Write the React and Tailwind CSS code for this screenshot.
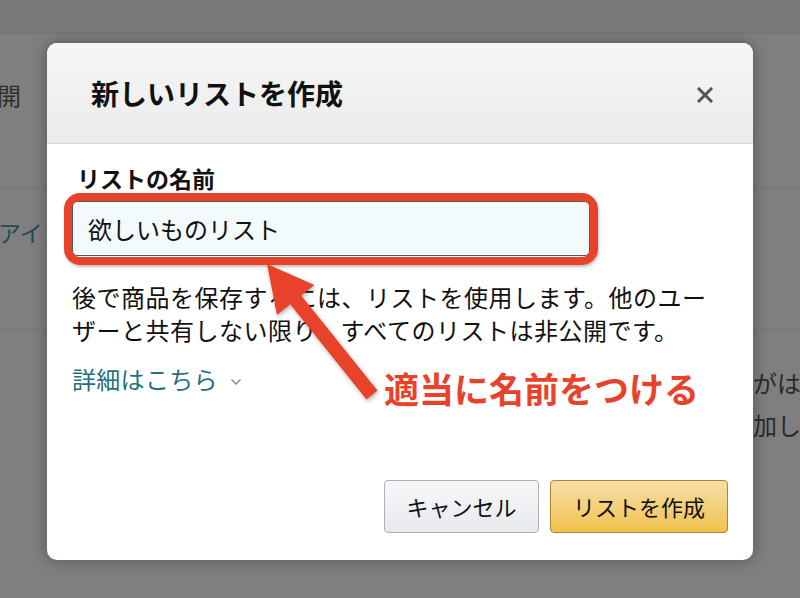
import React from "react";

const font = { fontFamily: '"Noto Sans CJK JP", "Noto Sans", sans-serif' };

export default function App() {
  return (
    <div
      className="relative w-[800px] h-[598px] overflow-hidden bg-[#7f7f7f] font-['Noto_Sans_CJK_JP',sans-serif]"
      style={font}
    >
      {/* background page */}
      <div className="flex flex-col h-full">
        <div className="h-[34px] bg-[#7a7a7a] border-b border-[#727272]" />
        <div className="h-[154px] border-b border-[#767676] pt-[49px]">
          <div className="text-[24px] leading-[24px] text-[#2e2e2e] ml-[-3px]">開</div>
        </div>
        <div className="h-[142px] border-b border-[#767676] pt-[31px]">
          <div className="text-[23px] leading-[26px] text-[#1d4b57] ml-[-2px]">アイ</div>
        </div>
        <div className="flex-1 flex justify-end pt-[32px]">
          <div className="w-[71px] text-[24px] leading-[42px] text-[#2a2a2a] whitespace-nowrap">
            <div>んがは</div>
            <div>追加し</div>
          </div>
        </div>
      </div>

      {/* modal */}
      <div className="absolute left-[47px] top-[43px] w-[706px] h-[517px] bg-white rounded-[10px] shadow-[0_0_16px_rgba(0,0,0,0.35)] flex flex-col overflow-hidden">
        <div className="h-[101px] shrink-0 flex items-center justify-between pl-[44px] pr-[40px] bg-gradient-to-b from-[#f6f6f6] to-[#ebebeb] border-b border-[#d5d9d9]">
          <div className="text-[28px] font-bold text-[#111] leading-[36px]">新しいリストを作成</div>
          <svg width="16" height="16" viewBox="0 0 16 16" className="mt-[3px]">
            <path d="M2 2 L14 14 M14 2 L2 14" stroke="#555" strokeWidth="3" strokeLinecap="square" />
          </svg>
        </div>
        <div className="flex-1 flex flex-col px-[25px] pt-[19px] pb-[27px]">
          <div className="pl-[5px] text-[23px] leading-[30px] font-bold text-[#111]">リストの名前</div>
          <div className="relative mt-[8px] w-[518px] h-[55px]">
            <div className="w-full h-full border border-[#4d5a5c] rounded-[5px] bg-[#f3fafc] flex items-center pl-[15px] text-[24px] text-[#111]">
              欲しいものリスト
            </div>
            <div className="absolute -left-[8px] -top-[8px] -right-[8px] -bottom-[9px] border-[8px] border-[#e8432a] rounded-[16px] shadow-[1px_2px_3px_rgba(0,0,0,0.25)]" />
          </div>
          <p className="mt-[24px] text-[24px] leading-[33px] tracking-[0.5px] text-[#111] whitespace-nowrap">
            後で商品を保存するには、リストを使用します。他のユー
            <br />
            ザーと共有しない限り、すべてのリストは非公開です。
          </p>
          <div className="mt-[16px] flex items-center text-[24px] leading-[33px] text-[#25707e]">
            <span className="tracking-[0.3px]">詳細はこちら</span>
            <svg width="12" height="8" viewBox="0 0 12 8" className="ml-[12px] mt-[6px]">
              <path d="M1.5 1.5 L6 6 L10.5 1.5" stroke="#888" strokeWidth="1.4" fill="none" />
            </svg>
          </div>
          <div className="mt-auto flex justify-end gap-[11px]">
            <button className="w-[155px] h-[53px] rounded-[4px] border border-[#adb1b8] bg-gradient-to-b from-[#f7f8fa] to-[#e7e9ec] text-[22px] text-[#111] flex items-center justify-center">
              キャンセル
            </button>
            <button className="w-[178px] h-[53px] rounded-[4px] border border-[#a88734] bg-gradient-to-b from-[#f7dfa5] to-[#f0c14b] text-[22px] text-[#111] flex items-center justify-center">
              リストを作成
            </button>
          </div>
        </div>
      </div>

      {/* annotation */}
      <svg
        className="absolute left-0 top-0 drop-shadow-[1px_2px_2px_rgba(0,0,0,0.3)]"
        width="800"
        height="598"
        viewBox="0 0 800 598"
      >
        <polygon
          points="267,264 314.4,284.9 301.2,295.5 377.5,390.6 366.5,399.4 290.2,304.3 277,314.9"
          fill="#e8432a"
        />
      </svg>
      <div className="absolute left-[384px] top-[366px] text-[35px] leading-[44px] font-bold text-[#e8432a] whitespace-nowrap">
        適当に名前をつける
      </div>
    </div>
  );
}
